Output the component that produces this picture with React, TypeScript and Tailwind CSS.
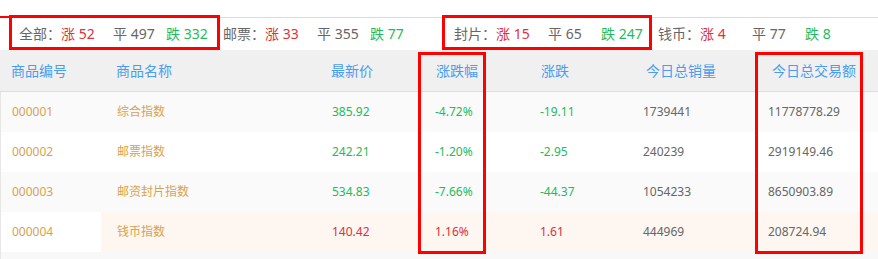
import React from "react";

const RED = "text-[#e0303c]";
const GREEN = "text-[#22bb5a]";

type Group = { label: string; up: number; flat: number; down: number; w: string };
const groups: Group[] = [
  { label: "全部：", up: 52, flat: 497, down: 332, w: "w-[204px]" },
  { label: "邮票：", up: 33, flat: 355, down: 77, w: "w-[231px]" },
  { label: "封片：", up: 15, flat: 65, down: 247, w: "w-[204px]" },
  { label: "钱币：", up: 4, flat: 77, down: 8, w: "w-[200px]" },
];

const headers = ["商品编号", "商品名称", "最新价", "涨跌幅", "涨跌", "今日总销量", "今日总交易额"];
const headPad = ["pl-[11px]", "pl-[16px]", "pl-[11px]", "pl-[11px]", "pl-[11px]", "pl-[11px]", "pl-[12px]"];
const cellPad = ["pl-[11px]", "pl-[16px]", "pl-[11px]", "pl-[9px]", "pl-[9px]", "pl-[7px]", "pl-[7px]"];
const cols = "grid grid-cols-[100px_220px_105px_105px_105px_125px_118px]";

type Row = { code: string; name: string; price: string; pct: string; chg: string; vol: string; amt: string; up: boolean };
const rows: Row[] = [
  { code: "000001", name: "综合指数", price: "385.92", pct: "-4.72%", chg: "-19.11", vol: "1739441", amt: "11778778.29", up: false },
  { code: "000002", name: "邮票指数", price: "242.21", pct: "-1.20%", chg: "-2.95", vol: "240239", amt: "2919149.46", up: false },
  { code: "000003", name: "邮资封片指数", price: "534.83", pct: "-7.66%", chg: "-44.37", vol: "1054233", amt: "8650903.89", up: false },
  { code: "000004", name: "钱币指数", price: "140.42", pct: "1.16%", chg: "1.61", vol: "444969", amt: "208724.94", up: true },
];

export default function App() {
  return (
    <div
      className="relative w-[878px] h-[259px] overflow-hidden bg-white text-[#666]"
      style={{ fontFamily: '"Noto Sans", "Noto Sans CJK SC", sans-serif' }}
    >
      <div className="h-[17px]" />
      <div className="h-[33px] border-t border-[#dcdcdc] flex items-center pl-[19px] text-[14px] leading-none">
        {groups.map((g) => (
          <div key={g.label} className={`flex items-center ${g.w}`}>
            <span className="w-[42px] text-[#666]">{g.label}</span>
            <span className={`w-[52px] ${RED}`}>涨 {g.up}</span>
            <span className="w-[53px] text-[#666]">平 {g.flat}</span>
            <span className={GREEN}>跌 {g.down}</span>
          </div>
        ))}
      </div>
      <div className={`${cols} h-[42px] bg-[#f0f0f0] border-b border-[#dddddd] items-center text-[14px] text-[#4a9cee]`}>
        {headers.map((h, i) => (
          <div key={h} className={headPad[i]}>
            {h}
          </div>
        ))}
      </div>
      <div className="border-l border-[#e6e6e6]">
        {rows.map((r, idx) => {
          const color = r.up ? RED : GREEN;
          const last = idx === 3;
          const bg = last ? "bg-[#fdf6f1]" : idx % 2 === 0 ? "bg-[#fafafa]" : "bg-white";
          const cells = [
            { t: r.code, c: "text-[#d9a24e]" },
            { t: r.name, c: "text-[#d9a24e]" },
            { t: r.price, c: color },
            { t: r.pct, c: color },
            { t: r.chg, c: color },
            { t: r.vol, c: "text-[#666]" },
            { t: r.amt, c: "text-[#666]" },
          ];
          return (
            <div key={r.code} className={`${cols} h-[40px] items-stretch text-[12px] ${last ? "" : bg}`}>
              {cells.map((c, i) => (
                <div
                  key={i}
                  className={`flex items-center ${cellPad[i]} ${c.c} ${last ? (i === 0 ? "bg-white" : bg) : ""}`}
                >
                  {c.t}
                </div>
              ))}
            </div>
          );
        })}
        <div className="h-[10px] bg-[#f8f8f8]" />
      </div>

      {/* annotation boxes */}
      <div className="absolute left-0 top-[16px] w-[10px] h-[2px] bg-[#ff0000]" />
      <div className="absolute left-[9px] top-[15px] w-[211px] h-[35px] border-[3px] border-[#ff0000]" />
      <div className="absolute left-[442px] top-[15px] w-[210px] h-[35px] border-[3px] border-[#ff0000]" />
      <div className="absolute left-[418px] top-[52px] w-[68px] h-[202px] border-[3px] border-[#ff0000]" />
      <div className="absolute left-[755px] top-[52px] w-[108px] h-[202px] border-[3px] border-[#ff0000]" />
    </div>
  );
}
